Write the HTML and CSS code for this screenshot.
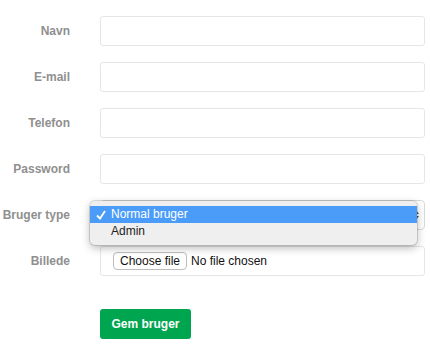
FILE: index.html
```html
<!DOCTYPE html>
<html lang="da">
<head>
  <meta charset="UTF-8" />
  <title>Opret bruger</title>
  <link rel="stylesheet" href="styles.css">
</head>
<body>
  <form class="user-form">
    <div class="form-row">
      <label class="form-label" for="navn">Navn</label>
      <input class="form-input" id="navn" type="text">
    </div>
    <div class="form-row">
      <label class="form-label" for="email">E-mail</label>
      <input class="form-input" id="email" type="email">
    </div>
    <div class="form-row">
      <label class="form-label" for="telefon">Telefon</label>
      <input class="form-input" id="telefon" type="text">
    </div>
    <div class="form-row">
      <label class="form-label" for="password">Password</label>
      <input class="form-input" id="password" type="password">
    </div>
    <div class="form-row">
      <label class="form-label" for="type">Bruger type</label>
      <div class="select-wrap">
        <select class="form-select" id="type">
          <option>Normal bruger</option>
          <option>Admin</option>
        </select>
        <svg class="select-arrows" width="6" height="12" viewBox="0 0 6 12">
          <path d="M3 1 L6 5 H0 Z M3 11 L0 7 H6 Z" fill="#555"/>
        </svg>
        <!-- open dropdown menu -->
        <ul class="select-menu">
          <li class="select-option selected">
            <svg class="check" width="10" height="10" viewBox="0 0 10 10">
              <path d="M1 5.5 L4 8.5 L9 1" fill="none" stroke="#fff" stroke-width="1.8"/>
            </svg>Normal bruger
          </li>
          <li class="select-option">Admin</li>
        </ul>
      </div>
    </div>
    <div class="form-row">
      <label class="form-label" for="billede">Billede</label>
      <label class="file-box" for="billede">
        <span class="file-btn">Choose file</span>
        <span class="file-name">No file chosen</span>
        <input class="file-hidden" id="billede" type="file">
      </label>
    </div>
    <div class="form-actions">
      <button class="save-btn" type="button">Gem bruger</button>
    </div>
  </form>
</body>
</html>
```

FILE: styles.css
```css
body {
  font-family: "Liberation Sans", Arial, sans-serif;
  margin: 0;
  padding: 0;
  background-color: #fff;
}
.user-form {
  padding: 16px 5px 0 0;
}
.form-row {
  display: flex;
  align-items: center;
  margin-bottom: 16px;
}
.form-label {
  width: 70px;
  margin-right: 30px;
  text-align: right;
  font-size: 12px;
  font-weight: bold;
  color: #8f8f8f;
}
.form-input {
  flex: 1;
  height: 30px;
  box-sizing: border-box;
  border: 1px solid #e6e6e6;
  border-radius: 3px;
  background: #fff;
  padding: 4px 8px;
  font-size: 12px;
}
.select-wrap {
  flex: 1;
  position: relative;
  height: 30px;
}
.form-select {
  appearance: none;
  width: 100%;
  height: 30px;
  box-sizing: border-box;
  border: 1px solid #d9d9d9;
  border-radius: 4px;
  background: #fff;
  font-family: inherit;
  font-size: 12px;
  color: transparent;
}
.select-arrows {
  position: absolute;
  right: 6px;
  top: 9px;
}
.select-menu {
  position: absolute;
  left: -10px;
  top: 1px;
  width: 327px;
  margin: 0;
  padding: 5px 0;
  list-style: none;
  background: #efefef;
  border-radius: 5px;
  box-shadow: 0 0 0 1px rgba(0, 0, 0, 0.12), 0 3px 8px rgba(0, 0, 0, 0.28);
}
.select-option {
  height: 17px;
  line-height: 17px;
  padding-left: 21px;
  font-size: 12px;
  color: #222;
  position: relative;
}
.select-option.selected {
  background: #4b9cf9;
  color: #fff;
}
.check {
  position: absolute;
  left: 6px;
  top: 4px;
}
.file-box {
  flex: 1;
  display: flex;
  align-items: center;
  height: 30px;
  box-sizing: border-box;
  border: 1px solid #e6e6e6;
  border-radius: 3px;
  padding-left: 12px;
  font-size: 12px;
  color: #111;
}
.file-btn {
  display: inline-block;
  width: 74px;
  height: 18px;
  line-height: 17px;
  box-sizing: border-box;
  border: 1px solid #bdbdbd;
  border-radius: 4px;
  background: #fff;
  text-align: center;
  margin-right: 4px;
}
.file-hidden {
  display: none;
}
.form-actions {
  padding: 17px 0 0 100px;
}
.save-btn {
  width: 91px;
  height: 30px;
  border: none;
  border-radius: 3px;
  background: #00a54f;
  color: #fff;
  font-family: inherit;
  font-size: 12px;
  font-weight: bold;
  cursor: pointer;
}
```
